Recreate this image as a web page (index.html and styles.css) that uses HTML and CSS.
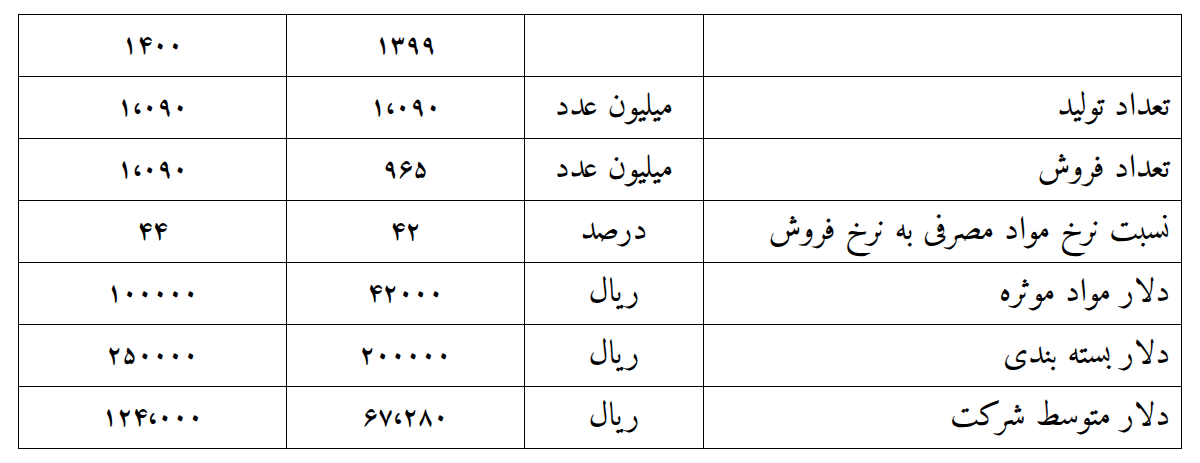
FILE: index.html
```html
<!DOCTYPE html>
<html lang="fa" dir="rtl">
<head>
<meta charset="utf-8">
<title>جدول</title>
<link rel="stylesheet" href="styles.css">
</head>
<body>
<div class="page">
<table class="data">
<colgroup>
<col class="c-label"><col class="c-unit"><col class="c-y1"><col class="c-y2">
</colgroup>
<tr><td class="label"></td><td class="unit"></td><td class="num">۱۳۹۹</td><td class="num">۱۴۰۰</td></tr>
<tr><td class="label">تعداد تولید</td><td class="unit">میلیون عدد</td><td class="num">۱،۰۹۰</td><td class="num">۱،۰۹۰</td></tr>
<tr><td class="label">تعداد فروش</td><td class="unit">میلیون عدد</td><td class="num">۹۶۵</td><td class="num">۱،۰۹۰</td></tr>
<tr><td class="label">نسبت نرخ مواد مصرفی به نرخ فروش</td><td class="unit">درصد</td><td class="num">۴۲</td><td class="num">۴۴</td></tr>
<tr><td class="label">دلار مواد موثره</td><td class="unit">ریال</td><td class="num">۴۲۰۰۰</td><td class="num">۱۰۰۰۰۰</td></tr>
<tr><td class="label">دلار بسته بندی</td><td class="unit">ریال</td><td class="num">۲۰۰۰۰۰</td><td class="num">۲۵۰۰۰۰</td></tr>
<tr><td class="label">دلار متوسط شرکت</td><td class="unit">ریال</td><td class="num">۶۷،۲۸۰</td><td class="num">۱۲۴،۰۰۰</td></tr>
</table>
</div>
</body>
</html>
```

FILE: styles.css
```css
html, body {
  margin: 0;
  padding: 0;
  background: #ffffff;
}
.page {
  padding: 14px 18px 0 19px;
}
.data {
  border-collapse: collapse;
  width: 1163px;
  table-layout: fixed;
  font-family: "Amiri", "Noto Naskh Arabic", "DejaVu Sans", serif;
  color: #000;
}
.c-label { width: 478px; }
.c-unit { width: 179px; }
.c-y1 { width: 238px; }
.c-y2 { width: 268px; }
.data td {
  border: 1px solid #000;
  height: 61px;
  padding: 0 11px;
  vertical-align: middle;
  line-height: 1;
}
.label {
  text-align: right;
  font-size: 33px;
}
.unit {
  text-align: center;
  font-size: 33px;
}
.num {
  text-align: center;
  font-size: 26px;
  font-weight: bold;
  padding-bottom: 6px;
}
```
